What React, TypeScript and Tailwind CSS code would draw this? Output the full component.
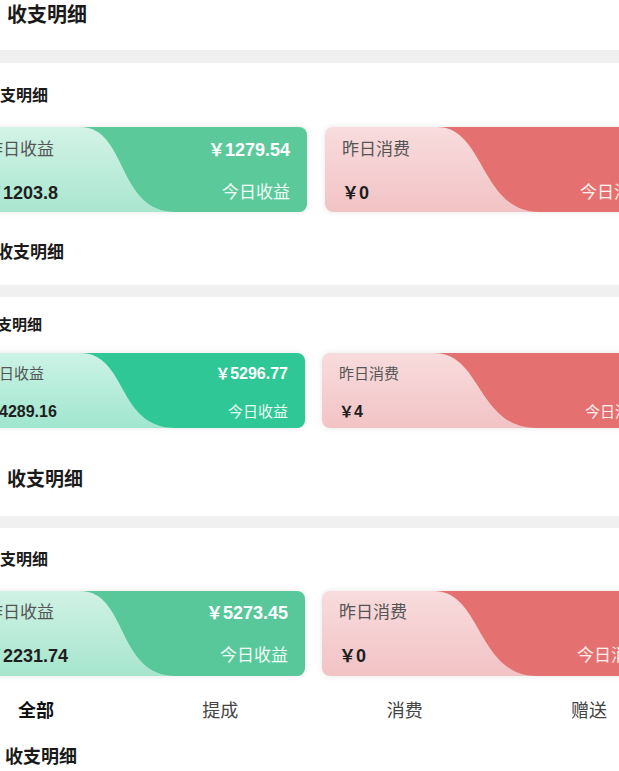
import React from "react";

const FONT = { fontFamily: '"Liberation Sans", "Noto Sans CJK SC", sans-serif' };

type CardProps = {
  h: number;
  dark: string;
  lightFrom: string;
  lightTo: string;
  x0: number;
  x1: number;
  w: number;
  label: string;
  amount: string;
  value: string;
  sub: string;
  size: "lg" | "sm";
  rowGap: string;
  pt: string;
  className: string;
};

function Money({ v, cls, yenCls }: { v: string; cls: string; yenCls: string }) {
  return (
    <span className={`${cls} inline-flex items-baseline font-bold`}>
      <span className={`${yenCls} font-['Noto_Sans_CJK_SC',sans-serif]`}>￥</span>
      <span>{v}</span>
    </span>
  );
}

function Card(p: CardProps) {
  const path = `M${p.x0},0 C${p.x0 + 48},0 ${p.x1 - 60},${p.h} ${p.x1},${p.h} L${p.w},${p.h} L${p.w},0 Z`;
  const labelCls = p.size === "lg" ? "text-[17px]" : "text-[15px]";
  const numCls = p.size === "lg" ? "text-[18px]" : "text-[16px]";
  return (
    <div
      className={`relative shrink-0 overflow-hidden rounded-[8px] shadow-[0_0_6px_rgba(0,0,0,0.10)] ${p.className}`}
      style={{ background: `linear-gradient(180deg, ${p.lightFrom}, ${p.lightTo})` }}
    >
      <svg className="absolute inset-0 h-full w-full" viewBox={`0 0 ${p.w} ${p.h}`} preserveAspectRatio="none">
        <path d={path} fill={p.dark} />
      </svg>
      <div className={`relative flex h-full flex-col px-[17px] ${p.pt} ${p.rowGap}`}>
        <div className="flex items-center justify-between leading-[22px]">
          <span className={`${labelCls} text-[#555]`}>{p.label}</span>
          <Money v={p.amount} cls={`${numCls} text-white`} yenCls={labelCls} />
        </div>
        <div className="flex items-center justify-between leading-[22px]">
          <Money v={p.value} cls={`${numCls} text-[#1e1e1e]`} yenCls={labelCls} />
          <span className={`${labelCls} text-white/90`}>{p.sub}</span>
        </div>
      </div>
    </div>
  );
}

function CardRow(props: {
  h: number;
  greenDark: string;
  greenFrom: string;
  greenTo: string;
  amount: string;
  value: string;
  redValue: string;
  size: "lg" | "sm";
  pt: string;
  rowGap: string;
  heightCls: string;
  gapCls: string;
  greenLeft: string;
  greenW: number;
  greenWCls: string;
  shift: number;
}) {
  return (
    <div className={`flex ${props.gapCls} ${props.greenLeft}`}>
      <Card
        h={props.h}
        dark={props.greenDark}
        lightFrom={props.greenFrom}
        lightTo={props.greenTo}
        x0={80 + props.shift}
        x1={176 + props.shift}
        w={props.greenW}
        label="昨日收益"
        amount={props.amount}
        value={props.value}
        sub="今日收益"
        size={props.size}
        pt={props.pt}
        rowGap={props.rowGap}
        className={`${props.greenWCls} ${props.heightCls}`}
      />
      <Card
        h={props.h}
        dark="#e4716f"
        lightFrom="#f8dcdd"
        lightTo="#f2c3c5"
        x0={112}
        x1={215}
        w={340}
        label="昨日消费"
        amount="0"
        value={props.redValue}
        sub="今日消费"
        size={props.size}
        pt={props.pt}
        rowGap={props.rowGap}
        className={`w-[340px] ${props.heightCls}`}
      />
    </div>
  );
}

export default function App() {
  return (
    <div className="h-[771px] w-[619px] overflow-hidden bg-white" style={FONT}>
      {/* Strip 1 */}
      <div className="flex h-[50px] items-start pl-[7px] pt-[4px]">
        <span className="text-[20px] font-bold leading-[22px] text-[#1a1a1a]">收支明细</span>
      </div>
      <div className="h-[13px] bg-[#f0f0f0]" />
      <div className="flex h-[64px] items-start pt-[23px]">
        <span className="ml-[-16px] text-[16px] font-bold leading-[20px] text-[#1a1a1a]">收支明细</span>
      </div>
      <CardRow
        h={85}
        greenDark="#5cc99b"
        greenFrom="#d3f3e7"
        greenTo="#a9e6cf"
        amount="1279.54"
        value="1203.8"
        redValue="0"
        size="lg"
        pt="pt-[11px]"
        rowGap="gap-[20px]"
        heightCls="h-[85px]"
        gapCls="gap-[18px]"
        greenLeft="ml-[-31px]"
        greenW={338}
        greenWCls="w-[338px]"
        shift={31}
      />
      <div className="flex h-[73px] items-start pt-[31px]">
        <span className="ml-[-4px] text-[17px] font-bold leading-[20px] text-[#1a1a1a]">收支明细</span>
      </div>

      {/* Strip 2 */}
      <div className="h-[12px] bg-[#f0f0f0]" />
      <div className="flex h-[56px] items-start pt-[19px]">
        <span className="ml-[-18px] text-[15px] font-bold leading-[18px] text-[#1a1a1a]">收支明细</span>
      </div>
      <CardRow
        h={75}
        greenDark="#2ec795"
        greenFrom="#cdf3e6"
        greenTo="#a0e6cf"
        amount="5296.77"
        value="4289.16"
        redValue="4"
        size="sm"
        pt="pt-[9px]"
        rowGap="gap-[15px]"
        heightCls="h-[75px]"
        gapCls="gap-[17px]"
        greenLeft="ml-[-33px]"
        greenW={338}
        greenWCls="w-[338px]"
        shift={33}
      />
      <div className="flex h-[88px] items-start pl-[7px] pt-[41px]">
        <span className="text-[19px] font-bold leading-[22px] text-[#1a1a1a]">收支明细</span>
      </div>

      {/* Strip 3 */}
      <div className="h-[12px] bg-[#f0f0f0]" />
      <div className="flex h-[63px] items-start pt-[22px]">
        <span className="ml-[-16px] text-[16px] font-bold leading-[20px] text-[#1a1a1a]">收支明细</span>
      </div>
      <CardRow
        h={85}
        greenDark="#58c89a"
        greenFrom="#d0f2e5"
        greenTo="#a6e5cd"
        amount="5273.45"
        value="2231.74"
        redValue="0"
        size="lg"
        pt="pt-[10px]"
        rowGap="gap-[20px]"
        heightCls="h-[85px]"
        gapCls="gap-[17px]"
        greenLeft="ml-[-31px]"
        greenW={336}
        greenWCls="w-[336px]"
        shift={31}
      />
      <div className="flex h-[70px] items-center justify-between pl-[18px] pr-[12px]">
        <span className="text-[18px] font-bold text-[#111]">全部</span>
        <span className="text-[18px] text-[#444]">提成</span>
        <span className="text-[18px] text-[#444]">消费</span>
        <span className="text-[18px] text-[#444]">赠送</span>
      </div>
      <div className="flex items-start pl-[5px]">
        <span className="text-[18px] font-bold leading-[22px] text-[#1a1a1a]">收支明细</span>
      </div>
    </div>
  );
}
